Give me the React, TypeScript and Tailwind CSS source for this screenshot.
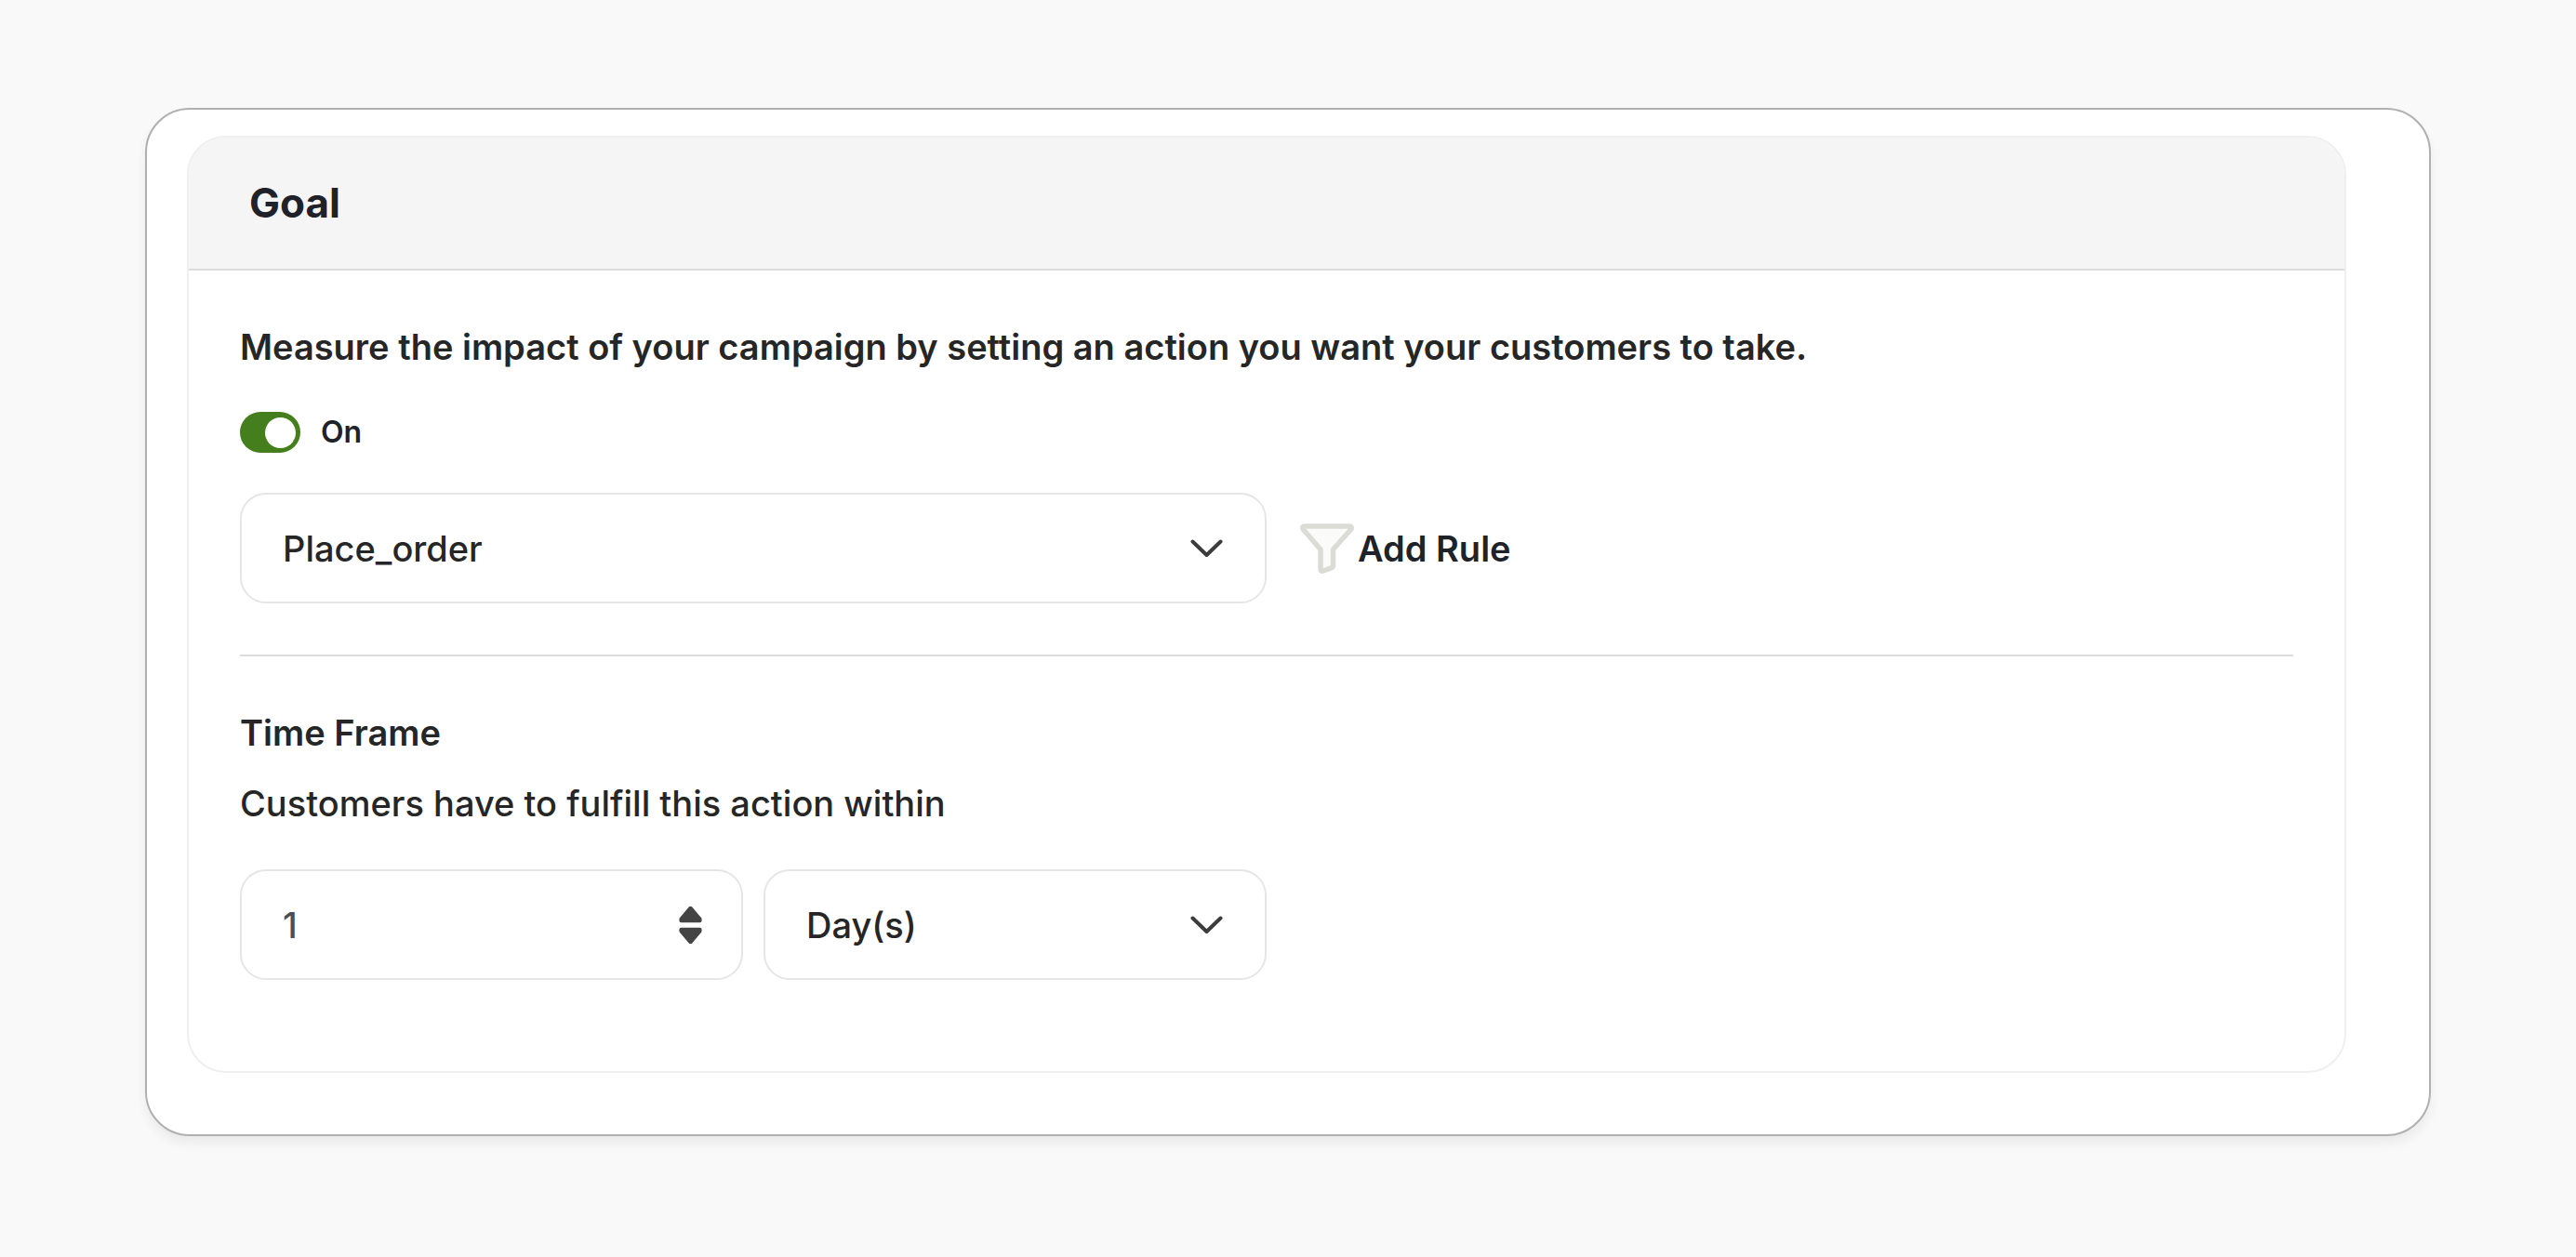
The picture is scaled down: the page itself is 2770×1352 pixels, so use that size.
import { useState } from "react";

function Chevron() {
  return (
    <svg
      viewBox="0 0 36 20"
      fill="none"
      stroke="#3c3c3c"
      strokeWidth="4"
      strokeLinecap="round"
      strokeLinejoin="round"
      className="pointer-events-none absolute right-[46px] top-1/2 h-5 w-9 -translate-y-1/2"
    >
      <path d="M2.5 2.5 17.5 17 32.5 2.5" />
    </svg>
  );
}

interface SelectProps {
  label: string;
  options: string[];
}

function Select({ label, options }: SelectProps) {
  return (
    <div className="relative min-w-0 flex-1">
      <select
        aria-label={label}
        className="block h-[119px] w-full appearance-none rounded-[28px] border-2 border-[#e6e6e6] bg-white px-11 text-[38px] font-medium leading-12 text-[#262626]"
      >
        {options.map((option) => (
          <option key={option}>{option}</option>
        ))}
      </select>
      <Chevron />
    </div>
  );
}

export default function App() {
  const [enabled, setEnabled] = useState(true);
  const [amount, setAmount] = useState(1);

  return (
    <main className="min-h-screen bg-[#f9f9f9] px-[156px] py-[116px] font-['Inter',sans-serif]">
      <div className="rounded-[48px] border-2 border-[#b0b0b0] bg-white pb-[66px] pl-[43px] pr-[89px] pt-7 shadow-[0_8px_12px_rgba(0,0,0,0.06)]">
        <section className="overflow-hidden rounded-[42px] border-2 border-[#efefef]">
          <header className="border-b-2 border-[#dcdcdc] bg-[#f5f5f5] px-[65px] py-11">
            <h2 className="text-[44px] font-bold leading-[53px] text-[#20222a]">Goal</h2>
          </header>

          <div className="px-[55px] pb-[98px] pt-[58px] text-[#262626]">
            <p className="text-[38px] font-semibold leading-12">
              Measure the impact of your campaign by setting an action you want your customers to take.
            </p>

            <label className="mt-[46px] flex w-fit cursor-pointer items-center gap-[22px]">
              <input
                type="checkbox"
                checked={enabled}
                onChange={(e) => setEnabled(e.target.checked)}
                className="peer sr-only"
              />
              <span className="flex h-11 w-[65px] items-center rounded-full bg-gray-300 px-[5px] peer-checked:justify-end peer-checked:bg-[#457f1d]">
                <span className="size-[33px] rounded-full bg-white" />
              </span>
              <span className="text-[32px] font-semibold leading-11 text-[#20222a]">
                {enabled ? "On" : "Off"}
              </span>
            </label>

            <div className="mt-[43px] flex items-center">
              <div className="flex w-1/2">
                <Select label="Goal event" options={["Place_order", "Add_to_cart", "Sign_up"]} />
              </div>
              <button
                type="button"
                className="ml-9 flex items-center gap-1 text-[38px] font-semibold leading-12 text-[#20222a]"
              >
                <svg
                  viewBox="0 0 58 54"
                  fill="#fbfbf9"
                  stroke="#dcdcd6"
                  strokeWidth="5.5"
                  strokeLinejoin="round"
                  className="h-[54px] w-[58px]"
                >
                  <path d="M5 3H53Q56 3 55 6L35.5 28V45.5Q35.5 47 34 47.6L25 51Q22 52 22 49V28L3 6Q2 3 5 3Z" />
                </svg>
                Add Rule
              </button>
            </div>

            <hr className="mt-[55px] border-t-2 border-[#dcdcdc]" />

            <h3 className="mt-[58px] text-[38px] font-semibold leading-12">Time Frame</h3>
            <p className="mt-7 text-[38px] font-medium leading-12">
              Customers have to fulfill this action within
            </p>

            <div className="mt-[47px] flex w-1/2 gap-[22px]">
              <div className="relative min-w-0 flex-1">
                <input
                  type="number"
                  min={1}
                  aria-label="Amount"
                  value={amount}
                  onChange={(e) => setAmount(Number(e.target.value))}
                  className="block h-[119px] w-full appearance-none rounded-[28px] border-2 border-[#e6e6e6] bg-white px-11 text-[38px] font-medium leading-12 text-[#495057] [appearance:textfield] [&::-webkit-inner-spin-button]:appearance-none"
                />
                <div className="absolute right-11 top-1/2 flex -translate-y-1/2 flex-col gap-[5px]">
                  <button type="button" aria-label="Increase" onClick={() => setAmount(amount + 1)}>
                    <svg viewBox="0 0 25 18" fill="#444444" className="block h-[18px] w-[25px]">
                      <path d="M11 .8Q12.5 -.5 14 .8L24.3 13Q25.5 17.8 22 18H3Q-.5 17.8 .7 13Z" />
                    </svg>
                  </button>
                  <button
                    type="button"
                    aria-label="Decrease"
                    onClick={() => setAmount(Math.max(1, amount - 1))}
                  >
                    <svg viewBox="0 0 25 18" fill="#444444" className="block h-[18px] w-[25px]">
                      <path d="M11 17.2Q12.5 18.5 14 17.2L24.3 5Q25.5 .2 22 0H3Q-.5 .2 .7 5Z" />
                    </svg>
                  </button>
                </div>
              </div>
              <Select label="Time unit" options={["Day(s)", "Week(s)", "Month(s)"]} />
            </div>
          </div>
        </section>
      </div>
    </main>
  );
}
